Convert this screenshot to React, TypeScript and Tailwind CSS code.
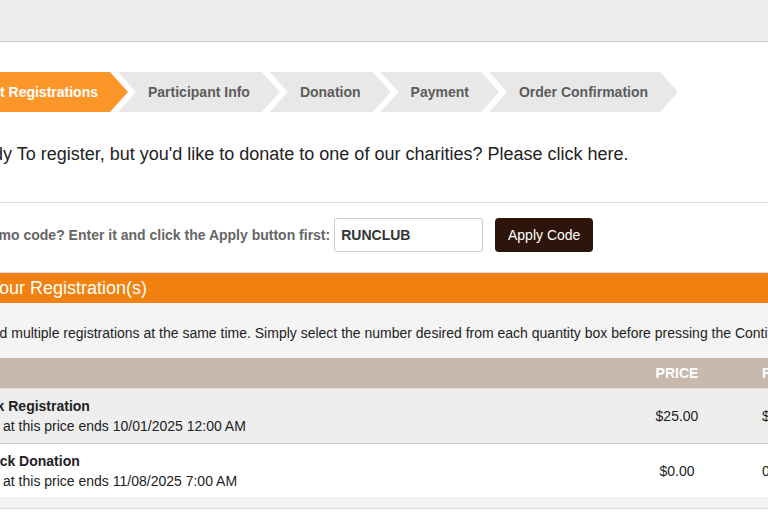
const STEPS = ["Participant Info", "Donation", "Payment", "Order Confirmation"];

const ROWS = [
  {
    name: "10k Registration",
    note: "Tix at this price ends 10/01/2025 12:00 AM",
    price: "$25.00",
    fee: "$2.50",
    row: "h-[55px] border-b border-[#cccccc] bg-[#eeeeee]",
  },
  {
    name: "Buck Donation",
    note: "Tix at this price ends 11/08/2025 7:00 AM",
    price: "$0.00",
    fee: "0.00",
    row: "h-[53px] bg-white",
  },
];

function Steps() {
  return (
    <nav className="mt-[30px] flex h-[40px] text-[14px] font-bold">
      <div className="flex w-[200px] items-center justify-end bg-[#fc9628] pr-[30px] text-white [clip-path:polygon(0_0,calc(100%_-_18px)_0,100%_50%,calc(100%_-_18px)_100%,0_100%)]">
        Select Registrations
      </div>
      {STEPS.map((step) => (
        <div
          key={step}
          className="-ml-[10px] flex items-center bg-[#e8e8e8] px-[30px] text-[#5c5c5c] [clip-path:polygon(0_0,calc(100%_-_18px)_0,100%_50%,calc(100%_-_18px)_100%,0_100%,18px_50%)]"
        >
          {step}
        </div>
      ))}
    </nav>
  );
}

export default function App() {
  return (
    <div className="h-[512px] w-[768px] overflow-hidden bg-white font-['Liberation_Sans',Arial,sans-serif] text-[#222]">
      <header className="h-[42px] border-b border-[#cccccc] bg-[#eeeeee]" />

      <main className="-ml-[72px] w-[1000px]">
        <Steps />

        <p className="mt-[32px] whitespace-nowrap pl-[6px] text-[18px] leading-[20px]">
          Not ready To register, but you'd like to donate to one of our charities? Please click here.
        </p>

        <div className="mt-[38px] border-t border-[#d5e0e4]" />

        <div className="flex items-center pt-[15px] pb-[20px]">
          <label className="-ml-[1px] whitespace-nowrap text-[14px] font-bold text-[#666]">
            Have a promo code? Enter it and click the Apply button first:
          </label>
          <input
            readOnly
            value="RUNCLUB"
            className="ml-[4px] h-[34px] w-[149px] rounded-[3px] border border-[#cccccc] px-[6px] text-[14px] font-bold text-[#333] outline-none"
          />
          <button className="ml-[12px] h-[34px] w-[98px] rounded-[4px] bg-[#2e150c] text-[14px] text-white">
            Apply Code
          </button>
        </div>

        <section className="border-t border-[#dddddd]">
          <h2 className="h-[30px] bg-[#f28210] pl-[6px] text-[18px] leading-[30px] text-white">
            Select Your Registration(s)
          </h2>
          <p className="whitespace-nowrap bg-[#f4f4f4] pt-[20px] pb-[15px] pl-[2px] text-[14px] leading-[20px]">
            You can add multiple registrations at the same time. Simply select the number desired from each quantity
            box before pressing the Continue button.
          </p>

          <div className="grid h-[31px] grid-cols-[699px_100px_1fr] items-center border-b border-[#e2e2e2] bg-[#c7b9ad] text-[14px] font-bold text-white">
            <span />
            <span className="text-center">PRICE</span>
            <span className="pl-[35px]">FEE</span>
          </div>

          {ROWS.map((r) => (
            <div
              key={r.name}
              className={`grid grid-cols-[699px_100px_1fr] items-center text-[14px] leading-[20px] ${r.row}`}
            >
              <div className="whitespace-nowrap pl-[53px]">
                <div className="font-bold">{r.name}</div>
                <div>{r.note}</div>
              </div>
              <span className="text-center">{r.price}</span>
              <span className="pl-[35px]">{r.fee}</span>
            </div>
          ))}

          <div className="h-[12px] border-b border-[#dddddd] bg-[#f3f3f3]" />
        </section>
      </main>
    </div>
  );
}
